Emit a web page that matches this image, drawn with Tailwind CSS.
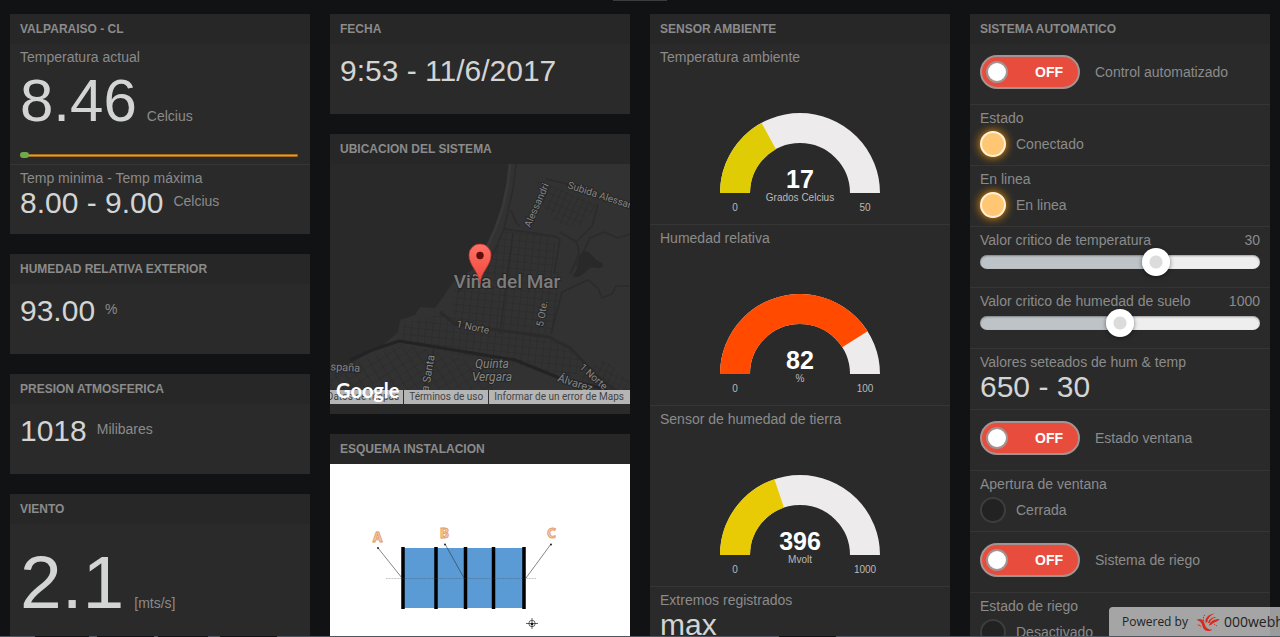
<!DOCTYPE html>
<html lang="es">
<head>
<meta charset="utf-8">
<title>Panel del sistema</title>
<script src="https://cdn.jsdelivr.net/npm/@tailwindcss/browser@4"></script>
</head>
<body class="relative h-screen overflow-hidden bg-[#101214] font-['Liberation_Sans',Arial,sans-serif] text-sm leading-[18px] text-[#8b8b8b]">
<div class="absolute left-1/2 top-0 h-px w-[54px] -translate-x-1/2 bg-[#3a3d40]"></div>

<main class="grid grid-cols-4 items-start gap-5 px-2.5 pt-3.5">

  <!-- Clima exterior -->
  <div class="flex flex-col gap-5">
    <section class="bg-[#2a2a2a] pb-2.5">
      <h2 class="bg-[#272727] px-2.5 text-xs font-bold leading-[30px]">VALPARAISO - CL</h2>
      <div class="h-[120px] px-2.5 pt-1">
        <h3>Temperatura actual</h3>
        <div class="flex items-baseline gap-2.5"><span class="text-[60px] leading-[70px] text-[#d3d4d4]">8.46</span><span>Celcius</span></div>
        <svg class="mt-2 h-5 w-full" viewBox="0 0 280 20" preserveAspectRatio="none">
          <path d="M2 11.5H278" stroke="#8a5a14" stroke-width="3"/>
          <path d="M2 11.5H277" stroke="#f59a1b" stroke-width="1.4"/>
          <rect x="0" y="8" width="9" height="6" rx="3" fill="#70a84a"/>
        </svg>
      </div>
      <div class="h-[60px] border-t border-[#353535] px-2.5 pt-1">
        <h3>Temp minima - Temp máxima</h3>
        <div class="flex gap-2.5"><span class="text-3xl leading-8 text-[#d3d4d4]">8.00 - 9.00</span><span class="leading-7">Celcius</span></div>
      </div>
    </section>

    <section class="h-[100px] bg-[#2a2a2a]">
      <h2 class="bg-[#272727] px-2.5 text-xs font-bold leading-[30px]">HUMEDAD RELATIVA EXTERIOR</h2>
      <div class="flex gap-2.5 px-2.5 pt-[11px]"><span class="text-3xl leading-8 text-[#d3d4d4]">93.00</span><span class="leading-7">%</span></div>
    </section>

    <section class="h-[100px] bg-[#2a2a2a]">
      <h2 class="bg-[#272727] px-2.5 text-xs font-bold leading-[30px]">PRESION ATMOSFERICA</h2>
      <div class="flex gap-2.5 px-2.5 pt-[11px]"><span class="text-3xl leading-8 text-[#d3d4d4]">1018</span><span class="leading-7">Milibares</span></div>
    </section>

    <section class="bg-[#2a2a2a] pb-16">
      <h2 class="bg-[#272727] px-2.5 text-xs font-bold leading-[30px]">VIENTO</h2>
      <div class="flex items-baseline gap-2.5 px-2.5 pt-[19px]"><span class="text-[75px] leading-[78px] text-[#d3d4d4]">2.1</span><span>[mts/s]</span></div>
    </section>
  </div>

  <!-- Fecha, mapa y esquema -->
  <div class="flex flex-col gap-5">
    <section class="h-[100px] bg-[#2a2a2a]">
      <h2 class="bg-[#272727] px-2.5 text-xs font-bold leading-[30px]">FECHA</h2>
      <div class="px-2.5 pt-[11px] text-3xl leading-8 text-[#d3d4d4]">9:53 - 11/6/2017</div>
    </section>

    <section class="bg-[#2a2a2a] pb-2.5">
      <h2 class="bg-[#272727] px-2.5 text-xs font-bold leading-[30px]">UBICACION DEL SISTEMA</h2>
      <div class="relative h-60 overflow-hidden">
        <svg class="h-full w-full font-['Roboto',sans-serif]" viewBox="0 0 300 240" preserveAspectRatio="xMidYMid slice">
          <defs>
            <pattern id="blocks" width="7" height="7" patternUnits="userSpaceOnUse" patternTransform="rotate(6)"><path d="M0 0H7M0 0V7" stroke="#292929" stroke-width="1.2"/></pattern>
            <pattern id="blocksTilt" width="6" height="7" patternUnits="userSpaceOnUse" patternTransform="rotate(24)"><path d="M0 0H6M0 0V7" stroke="#292929" stroke-width="1.2"/></pattern>
            <pattern id="blocksSouth" width="9" height="8" patternUnits="userSpaceOnUse" patternTransform="rotate(-32)"><path d="M0 0H9M0 0V8" stroke="#292929" stroke-width="1.2"/></pattern>
            <linearGradient id="pin" x2="0" y2="1"><stop offset="0" stop-color="#ff7267"/><stop offset="1" stop-color="#ee4438"/></linearGradient>
          </defs>
          <rect width="300" height="240" fill="#292929"/>
          <path d="M180 0 178 19 173 43 165 66 157 83 148 102 123 118 113 133 105 144 90 143 85 151 70 156 68 168 53 181 23 198 0 206V240H300V0Z" fill="#323232"/>
          <path d="M180 0 178 19 173 43 165 66 157 83" fill="none" stroke="#383838" stroke-width="3"/>
          <path d="M173 66 224 72 230 120 222 170 140 165 120 146 124 120 150 112Z" fill="url(#blocks)"/>
          <path d="M205 15 268 40 250 62 228 60 213 42Z" fill="url(#blocksTilt)"/>
          <path d="M72 160 110 150 230 178 262 205 240 212 100 185 72 175Z" fill="url(#blocks)"/>
          <path d="M0 212 70 180 100 186 170 205 160 240H0Z" fill="url(#blocksSouth)"/>
          <path d="M250 210 275 195 300 218V240H262Z" fill="url(#blocksTilt)"/>
          <g fill="none" stroke="#2b2b2b" stroke-width="1.500">
            <path d="M186 0 183 25 174 65 159 100 128 128"/>
            <path d="M174 65 224 72 230 75 224 110M230 68 246 78 262 62 268 40M216 15 250 23 300 44M180 46C184 50 184 60 190 62M183 70 178 105 170 170M221 170 232 128 258 116 268 124 272 134 282 130 286 122 300 122M240 110C248 92 252 88 246 78M246 102 260 74 274 68 288 74 300 70"/>
            <path d="M110 148 125 160 168 166 219 173 240 184 270 215 300 236" stroke-width="3"/>
            <path d="M20 196 45 185 69 177 100 182 185 196 227 213 270 224 300 236" stroke="#232323" stroke-width="3"/>
            <path d="M104 184 98 210 90 240"/>
          </g>
          <path d="M255 87C262 88 262 95 272 99 275 104 268 105 262 103 256 106 250 116 243 112 248 105 250 98 249 92Z" fill="#292929"/>
          <g fill="#858585" stroke="#262626" stroke-width="2" paint-order="stroke" font-size="10">
            <text transform="translate(200 64) rotate(-66)">Alessandri</text>
            <text transform="translate(237 24) rotate(18)">Subida Alessandri</text>
            <text transform="translate(126 163) rotate(12)">1 Norte</text>
            <text transform="translate(213 163) rotate(-80)">5 Ote.</text>
            <text transform="translate(-6 206) rotate(3)" font-size="11">España</text>
            <text transform="translate(95 247) rotate(-80)" font-size="11">Agua Santa</text>
            <text transform="translate(249 204) rotate(42)">1 Norte</text>
            <text transform="translate(227 217) rotate(18)" font-size="11">Álvarez</text>
            <g font-size="12" font-style="italic" text-anchor="middle"><text x="162" y="204">Quinta</text><text x="162" y="217">Vergara</text></g>
            <text x="177" y="124" font-size="19" font-weight="500" text-anchor="middle" fill="#7d7d7d">Viña del Mar</text>
          </g>
          <path d="M150 120C149 107 139 102 139 91A11 11 0 0 1 161 91C161 102 151 107 150 120Z" fill="url(#pin)" stroke="#c93a30" stroke-width=".7"/>
          <circle cx="150" cy="91.500" r="3.700" fill="#5c0f0b"/>
        </svg>
        <nav class="absolute bottom-0 right-0 flex h-3.5 gap-px whitespace-nowrap font-['Roboto',sans-serif] text-[10px] leading-[14px] text-[#444]">
          <a href="#" class="bg-[#b5b5b5] pl-1.5 pr-1">Datos de mapas</a>
          <a href="#" class="bg-[#b5b5b5] px-[5px]">Términos de uso</a>
          <a href="#" class="bg-[#b5b5b5] pl-[5px] pr-1.5">Informar de un error de Maps</a>
        </nav>
        <a href="#" class="absolute bottom-1 left-1.5 font-['Lato',sans-serif] text-xl font-bold leading-5 text-white">Google</a>
      </div>
    </section>

    <section class="bg-[#2a2a2a]">
      <h2 class="bg-[#272727] px-2.5 text-xs font-bold leading-[30px]">ESQUEMA INSTALACION</h2>
      <div class="h-60 bg-white">
        <svg class="h-full w-full" viewBox="0 0 300 240">
          <rect x="73" y="84" width="120" height="60" fill="#5b9bd5"/>
          <path d="M73 83V145M106 83V145M135.500 83V145M163.500 83V145M194 83V145" stroke="#000" stroke-width="3.500"/>
          <path d="M56 114.500H206" stroke="#444" stroke-width=".3" stroke-dasharray="2 .7"/>
          <path d="M48 84 72 114M115 80 134 114M221 80 196 114" stroke="#333" stroke-width=".6"/>
          <g fill="#111"><circle cx="48" cy="84" r=".9"/><circle cx="115" cy="80.500" r=".9"/><circle cx="221" cy="80.500" r=".9"/></g>
          <g fill="#f8cfae" stroke="#e0965f" stroke-width=".8" font-family="Noto Sans, sans-serif" font-weight="700" font-size="14" text-anchor="middle"><text x="47.500" y="78">A</text><text x="114.500" y="74">B</text><text x="221.500" y="74">C</text></g>
          <g fill="none" stroke="#222" stroke-width=".7"><circle cx="202" cy="159.500" r="3.200"/><path d="M196 159.500H208M202 154V165"/></g>
          <circle cx="202" cy="160" r="1.300" fill="#111"/>
        </svg>
      </div>
    </section>
  </div>

  <!-- Sensores -->
  <section class="bg-[#2a2a2a]">
    <h2 class="bg-[#272727] px-2.5 text-xs font-bold leading-[30px]">SENSOR AMBIENTE</h2>
    <div class="h-[180px] px-2.5 pt-1">
      <h3>Temperatura ambiente</h3>
      <svg class="mx-auto mt-[47px] h-[104px] w-40" viewBox="0 0 160 104" text-anchor="middle" font-size="10" fill="#b9b9b9">
        <path d="M15 80A65 65 0 0 1 145 80" fill="none" stroke="#edebeb" stroke-width="30"/>
        <path d="M15 80A65 65 0 0 1 145 80" fill="none" stroke="#dfcc04" stroke-width="30" pathLength="100" stroke-dasharray="34 200"/>
        <text x="80" y="75" font-size="25" font-weight="700" fill="#fff">17</text><text x="80" y="88">Grados Celcius</text><text x="15" y="98">0</text><text x="145" y="98">50</text>
      </svg>
    </div>
    <div class="h-[181px] border-t border-[#353535] px-2.5 pt-1">
      <h3>Humedad relativa</h3>
      <svg class="mx-auto mt-[47px] h-[104px] w-40" viewBox="0 0 160 104" text-anchor="middle" font-size="10" fill="#b9b9b9">
        <path d="M15 80A65 65 0 0 1 145 80" fill="none" stroke="#edebeb" stroke-width="30"/>
        <path d="M15 80A65 65 0 0 1 145 80" fill="none" stroke="#ff4a00" stroke-width="30" pathLength="100" stroke-dasharray="82 200"/>
        <text x="80" y="75" font-size="25" font-weight="700" fill="#fff">82</text><text x="80" y="88">%</text><text x="15" y="98">0</text><text x="145" y="98">100</text>
      </svg>
    </div>
    <div class="h-[181px] border-t border-[#353535] px-2.5 pt-1">
      <h3>Sensor de humedad de tierra</h3>
      <svg class="mx-auto mt-[47px] h-[104px] w-40" viewBox="0 0 160 104" text-anchor="middle" font-size="10" fill="#b9b9b9">
        <path d="M15 80A65 65 0 0 1 145 80" fill="none" stroke="#edebeb" stroke-width="30"/>
        <path d="M15 80A65 65 0 0 1 145 80" fill="none" stroke="#e8cb04" stroke-width="30" pathLength="100" stroke-dasharray="39.6 200"/>
        <text x="80" y="75" font-size="25" font-weight="700" fill="#fff">396</text><text x="80" y="88">Mvolt</text><text x="15" y="98">0</text><text x="145" y="98">1000</text>
      </svg>
    </div>
    <div class="h-[121px] border-t border-[#353535] px-2.5 pt-1">
      <h3>Extremos registrados</h3>
      <div class="text-3xl leading-8 text-[#d3d4d4]">max</div>
    </div>
  </section>

  <!-- Controles -->
  <section class="bg-[#2a2a2a]">
    <h2 class="bg-[#272727] px-2.5 text-xs font-bold leading-[30px]">SISTEMA AUTOMATICO</h2>
    <div class="flex h-[60px] items-start gap-[15px] px-2.5 pt-[11px]">
      <button id="auto" type="button" role="switch" aria-checked="false" class="flex h-[34px] w-[100px] items-center justify-between rounded-full border-2 border-[#a39391] bg-[#e84c3d] pl-1 pr-[15px] font-bold text-white"><span class="size-[22px] rounded-full border-2 border-[#a39391] bg-white"></span>OFF</button>
      <label for="auto" class="leading-[34px]">Control automatizado</label>
    </div>
    <div class="h-[61px] border-t border-[#353535] px-2.5 pt-1">
      <h3>Estado</h3>
      <div class="mt-1 flex items-center gap-2.5"><span class="size-[26px] rounded-full border-2 border-[#fdf1db] bg-[#ffc773] shadow-[0_0_10px_#ff9900]"></span><span>Conectado</span></div>
    </div>
    <div class="h-[61px] border-t border-[#353535] px-2.5 pt-1">
      <h3>En linea</h3>
      <div class="mt-1 flex items-center gap-2.5"><span class="size-[26px] rounded-full border-2 border-[#fdf1db] bg-[#ffc773] shadow-[0_0_10px_#ff9900]"></span><span>En linea</span></div>
    </div>
    <div class="h-[61px] border-t border-[#353535] px-2.5 pt-1">
      <div class="flex justify-between"><label for="temp">Valor critico de temperatura</label><output for="temp">30</output></div>
      <input id="temp" type="range" min="0" max="1000" value="643" class="mt-1.5 block h-3.5 w-full appearance-none rounded-full bg-linear-to-r from-[#bdc3c7] from-62% to-[#eeeeee] to-62% shadow-[inset_0_1px_2px_rgba(0,0,0,0.35)] [&::-webkit-slider-thumb]:size-7 [&::-webkit-slider-thumb]:appearance-none [&::-webkit-slider-thumb]:rounded-full [&::-webkit-slider-thumb]:bg-[radial-gradient(circle,#dcdcdc_6px,#ffffff_7px)] [&::-webkit-slider-thumb]:shadow-[0_1px_4px_rgba(0,0,0,0.5)]">
    </div>
    <div class="h-[61px] border-t border-[#353535] px-2.5 pt-1">
      <div class="flex justify-between"><label for="suelo">Valor critico de humedad de suelo</label><output for="suelo">1000</output></div>
      <input id="suelo" type="range" min="0" max="2000" value="1000" class="mt-1.5 block h-3.5 w-full appearance-none rounded-full bg-linear-to-r from-[#bdc3c7] from-50% to-[#eeeeee] to-50% shadow-[inset_0_1px_2px_rgba(0,0,0,0.35)] [&::-webkit-slider-thumb]:size-7 [&::-webkit-slider-thumb]:appearance-none [&::-webkit-slider-thumb]:rounded-full [&::-webkit-slider-thumb]:bg-[radial-gradient(circle,#dcdcdc_6px,#ffffff_7px)] [&::-webkit-slider-thumb]:shadow-[0_1px_4px_rgba(0,0,0,0.5)]">
    </div>
    <div class="h-[61px] border-t border-[#353535] px-2.5 pt-1">
      <h3>Valores seteados de hum &amp; temp</h3>
      <div class="text-3xl leading-8 text-[#d3d4d4]">650 - 30</div>
    </div>
    <div class="flex h-[61px] items-start gap-[15px] border-t border-[#353535] px-2.5 pt-[11px]">
      <button id="ventana" type="button" role="switch" aria-checked="false" class="flex h-[34px] w-[100px] items-center justify-between rounded-full border-2 border-[#a39391] bg-[#e84c3d] pl-1 pr-[15px] font-bold text-white"><span class="size-[22px] rounded-full border-2 border-[#a39391] bg-white"></span>OFF</button>
      <label for="ventana" class="leading-[34px]">Estado ventana</label>
    </div>
    <div class="h-[61px] border-t border-[#353535] px-2.5 pt-1">
      <h3>Apertura de ventana</h3>
      <div class="mt-1 flex items-center gap-2.5"><span class="size-[26px] rounded-full border-2 border-[#3d3d3d] bg-[#222222]"></span><span>Cerrada</span></div>
    </div>
    <div class="flex h-[61px] items-start gap-[15px] border-t border-[#353535] px-2.5 pt-[11px]">
      <button id="riego" type="button" role="switch" aria-checked="false" class="flex h-[34px] w-[100px] items-center justify-between rounded-full border-2 border-[#a39391] bg-[#e84c3d] pl-1 pr-[15px] font-bold text-white"><span class="size-[22px] rounded-full border-2 border-[#a39391] bg-white"></span>OFF</button>
      <label for="riego" class="leading-[34px]">Sistema de riego</label>
    </div>
    <div class="h-[61px] border-t border-[#353535] px-2.5 pt-1">
      <h3>Estado de riego</h3>
      <div class="mt-1 flex items-center gap-2.5"><span class="size-[26px] rounded-full border-2 border-[#3d3d3d] bg-[#222222]"></span><span>Desactivado</span></div>
    </div>
  </section>
</main>

<a href="#" class="absolute bottom-px right-0 flex h-[29px] w-[171px] items-center overflow-hidden whitespace-nowrap rounded-tl bg-white/58 pl-[13px] font-['Open_Sans',sans-serif] text-xs text-[#222]">
  <span>Powered by</span>
  <svg class="ml-2 h-5 w-6 shrink-0" viewBox="0 0 24 20" fill="#d9281c">
    <path d="M9.500 10.500C9 6 12 2.500 18.500 1.500 14 3.500 11.500 6.500 11.200 10.500Z"/>
    <path d="M12 11C13 7 17 4.500 20.500 5 17 6 14.500 8 13.500 11Z"/>
    <path d="M13 13.500C14 9.500 18 7 23.500 7 22 10 18.500 9.500 15 13Z"/>
    <path d="M.5 8C4 6 7.500 7.500 8.500 11.500 9.500 15.500 12 18 16.500 17.500 12.500 20.500 7.500 19 6.500 14 5.800 10.500 4 8.500.5 8Z"/>
    <path d="M1 13C3 11.500 4.500 13 5.500 15.500 4 13.800 3 13.200 1 13Z"/>
    <g fill="none" stroke="#d9281c" stroke-dasharray="1.500 1"><path d="M7.500 9C7 6 7.500 4 9.500 2M18 12 21 14"/></g>
  </svg>
  <span class="ml-1 text-sm">000webhost</span>
</a>
<div class="absolute inset-x-0 bottom-0 flex h-px bg-[#50575f]"><span class="ml-[35px] h-px w-[54px] bg-[#101214]"></span><span class="ml-2 h-px w-[57px] bg-[#101214]"></span><span class="ml-1 h-px w-[50px] bg-[#101214]"></span><span class="ml-3 h-px w-[57px] bg-[#101214]"></span><span class="ml-[502px] h-px w-[57px] bg-[#101214]"></span></div>
</body>
</html>
